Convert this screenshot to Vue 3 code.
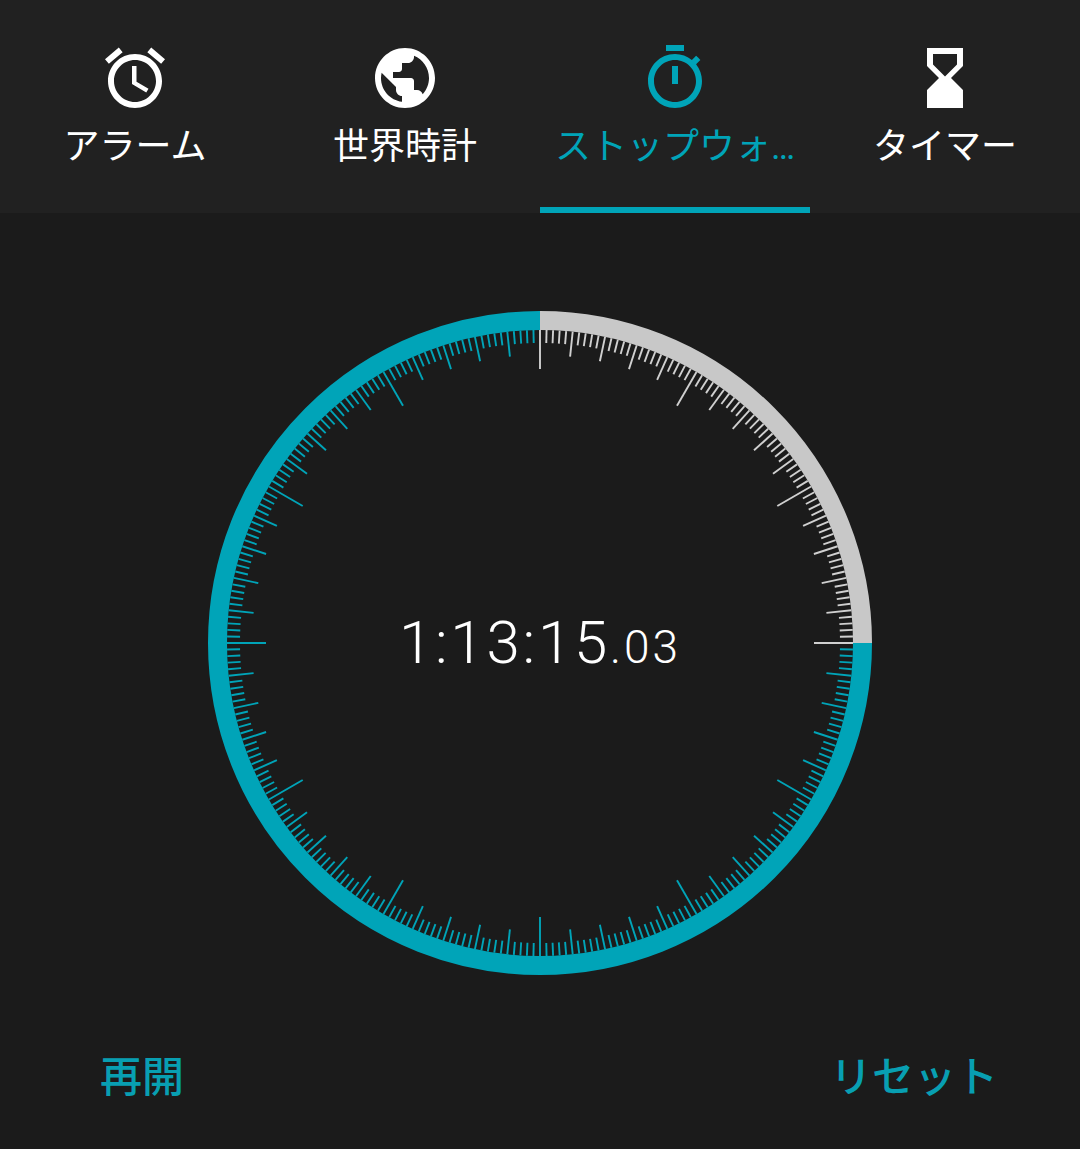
<script setup>
const tabs = [
  { key: 'alarm', label: 'アラーム', path: 'M22 5.72l-4.6-3.86-1.29 1.53 4.6 3.86L22 5.72zM7.88 3.39L6.6 1.86 2 5.71l1.29 1.53 4.59-3.85zM12.5 8H11v6l4.75 2.85.75-1.23-4-2.37V8zM12 4c-4.97 0-9 4.03-9 9s4.02 9 9 9c4.97 0 9-4.03 9-9s-4.03-9-9-9zm0 16c-3.87 0-7-3.13-7-7s3.13-7 7-7 7 3.13 7 7-3.13 7-7 7z' },
  { key: 'world', label: '世界時計', path: 'M12 2C6.48 2 2 6.48 2 12s4.48 10 10 10 10-4.48 10-10S17.52 2 12 2zm-1 17.93c-3.95-.49-7-3.85-7-7.93 0-.62.08-1.21.21-1.79L9 15v1c0 1.1.9 2 2 2v1.93zm6.9-2.54c-.26-.81-1-1.39-1.9-1.39h-1v-3c0-.55-.45-1-1-1H8v-2h2c.55 0 1-.45 1-1V7h2c1.1 0 2-.9 2-2v-.41c2.93 1.19 5 4.06 5 7.41 0 2.08-.8 3.97-2.1 5.39z' },
  { key: 'watch', label: 'ストップウォ…', active: true, path: 'M15 1H9v2h6V1zm-4 13h2V8h-2v6zm8.03-6.61l1.42-1.42c-.43-.51-.9-.99-1.41-1.41l-1.42 1.42C16.07 4.74 14.12 4 12 4c-4.97 0-9 4.03-9 9s4.02 9 9 9 9-4.03 9-9c0-2.12-.74-4.07-1.97-5.61zM12 20c-3.87 0-7-3.13-7-7s3.13-7 7-7 7 3.13 7 7-3.13 7-7 7z' },
  { key: 'timer', label: 'タイマー', path: 'M18 22l-.01-6L14 12l3.99-4.01L18 2H6v6l4 4-4 3.99V22h12zM8 7.5V4h8v3.5l-4 4-4-4z' },
]

const C = 332
const OUTER = 313
const ticks = Array.from({ length: 300 }, (_, i) => {
  const a = (i * 1.2 * Math.PI) / 180
  const len = i % 25 === 0 ? 39 : i % 5 === 0 ? 25 : 13
  const s = Math.sin(a)
  const c = Math.cos(a)
  return {
    i,
    x1: C + OUTER * s,
    y1: C - OUTER * c,
    x2: C + (OUTER - len) * s,
    y2: C - (OUTER - len) * c,
    done: i > 75,
  }
})
</script>

<template>
  <div class="screen">
    <nav class="tabs">
      <div v-for="t in tabs" :key="t.key" class="tab" :class="{ active: t.active }">
        <svg class="tab-icon" viewBox="0 0 24 24" width="72" height="72"><path :d="t.path" fill="currentColor" /></svg>
        <span class="tab-label">{{ t.label }}</span>
      </div>
    </nav>

    <main class="body">
      <div class="dial">
        <svg viewBox="0 0 664 664" width="664" height="664">
          <path class="arc-rest" d="M332 9.5A322.5 322.5 0 0 1 654.5 332" />
          <path class="arc-done" d="M654.5 332A322.5 322.5 0 1 1 332 9.5" />
          <line
            v-for="t in ticks"
            :key="t.i"
            :x1="t.x1"
            :y1="t.y1"
            :x2="t.x2"
            :y2="t.y2"
            :class="t.done ? 'tick-done' : 'tick-rest'"
          />
        </svg>
        <div class="time">1:13:15<span class="hundredths">.03</span></div>
      </div>

      <div class="actions">
        <button class="action">再開</button>
        <button class="action">リセット</button>
      </div>
    </main>
  </div>
</template>

<style scoped>
.screen {
  width: 1080px;
  height: 1149px;
  display: flex;
  flex-direction: column;
  background: #1b1b1b;
  font-family: Roboto, "Noto Sans CJK JP", sans-serif;
  overflow: hidden;
}
.tabs {
  height: 213px;
  display: grid;
  grid-template-columns: repeat(4, 270px);
  background: #212121;
}
.tab {
  box-sizing: border-box;
  height: 213px;
  padding-top: 42px;
  display: flex;
  flex-direction: column;
  align-items: center;
  color: #fff;
}
.tab.active {
  color: #00a4b8;
  border-bottom: 6px solid #00a4b8;
}
.tab-icon {
  display: block;
  flex: none;
}
.tab-label {
  margin-top: 9px;
  font-size: 36px;
  line-height: 48px;
  text-align: center;
  white-space: nowrap;
}
.body {
  flex: 1;
  display: flex;
  flex-direction: column;
  align-items: stretch;
}
.dial {
  position: relative;
  width: 664px;
  height: 664px;
  margin: 98px auto 0;
}
.dial svg {
  display: block;
}
.arc-rest,
.arc-done {
  fill: none;
  stroke-width: 19;
}
.arc-rest {
  stroke: #c8c8c8;
}
.arc-done {
  stroke: #00a4b8;
}
.tick-rest,
.tick-done {
  stroke-width: 1.9;
}
.tick-rest {
  stroke: #d0d0d0;
}
.tick-done {
  stroke: #00a4b8;
}
.time {
  position: absolute;
  left: 0;
  right: 0;
  top: 292px;
  text-align: center;
  color: #fff;
  font-weight: 300;
  font-size: 60px;
  line-height: 80px;
  letter-spacing: 2.8px;
  white-space: nowrap;
}
.hundredths {
  font-size: 46px;
  letter-spacing: 3px;
}
.actions {
  display: flex;
  justify-content: space-between;
  padding: 75px 82px 0 100px;
}
.action {
  padding: 0;
  border: 0;
  background: none;
  color: #089fb2;
  font: inherit;
  font-size: 42px;
  font-weight: 500;
  line-height: 56px;
}
</style>
